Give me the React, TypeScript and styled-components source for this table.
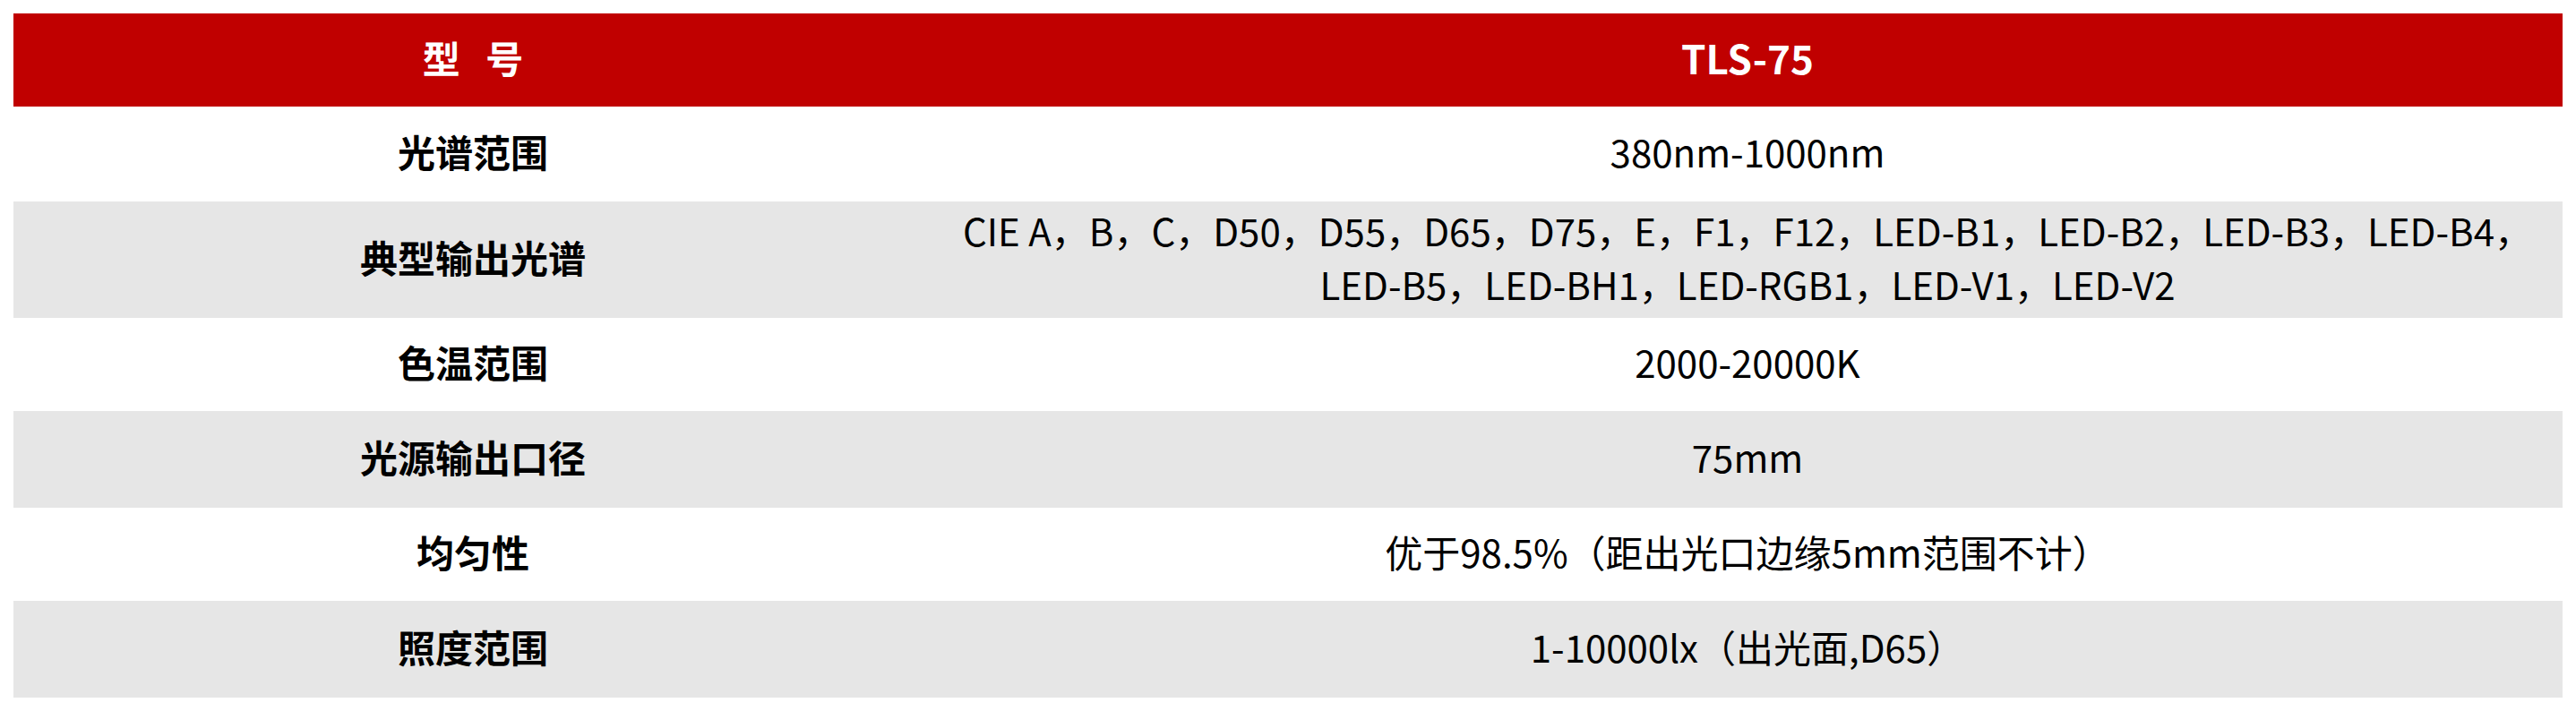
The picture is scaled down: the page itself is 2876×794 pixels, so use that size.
import styled, { createGlobalStyle } from 'styled-components';

const GlobalStyle = createGlobalStyle`
  html, body {
    margin: 0;
    padding: 0;
    background: #ffffff;
  }
  body {
    font-family: "Noto Sans CJK SC", "Noto Sans", sans-serif;
    color: #000000;
  }
`;

const Page = styled.div`
  padding: 15px;
`;

const SpecTable = styled.table`
  width: 100%;
  border-collapse: collapse;
  border-spacing: 0;
  table-layout: fixed;
`;

const HeadRow = styled.tr`
  height: 104px;
  background: #c00000;
  color: #ffffff;
`;

// the CJK font sits a little low in its line box, so cells carry a bit of bottom padding
const HeadCell = styled.th<{ $wide?: boolean }>`
  padding: 0 0 7px;
  width: ${(p) => (p.$wide ? 'auto' : '1026px')};
  font-size: ${(p) => (p.$wide ? '44px' : '42px')};
  font-weight: 700;
  text-align: center;
  white-space: pre;
`;

const Row = styled.tr<{ $shade: boolean; $h: number }>`
  height: ${(p) => p.$h}px;
  background: ${(p) => (p.$shade ? '#e6e6e6' : '#ffffff')};
`;

const LabelCell = styled.td`
  padding: 0 0 7px;
  font-size: 42px;
  font-weight: 700;
  text-align: center;
`;

const ValueCell = styled.td`
  padding: 0 0 7px;
  font-size: 42px;
  font-weight: 400;
  line-height: 60px;
  text-align: center;
`;

const rows: { label: string; value: React.ReactNode; h: number }[] = [
  { label: '光谱范围', value: '380nm-1000nm', h: 106 },
  {
    label: '典型输出光谱',
    value: (
      <>
        CIE A，B，C，D50，D55，D65，D75，E，F1，F12，LED-B1，LED-B2，LED-B3，LED-B4，
        <br />
        LED-B5，LED-BH1，LED-RGB1，LED-V1，LED-V2
      </>
    ),
    h: 130,
  },
  { label: '色温范围', value: '2000-20000K', h: 104 },
  { label: '光源输出口径', value: '75mm', h: 108 },
  { label: '均匀性', value: '优于98.5%（距出光口边缘5mm范围不计）', h: 104 },
  { label: '照度范围', value: '1-10000lx（出光面,D65）', h: 108 },
];

export default function App() {
  return (
    <>
      <GlobalStyle />
      <Page>
        <SpecTable>
          <thead>
            <HeadRow>
              <HeadCell>{'型   号'}</HeadCell>
              <HeadCell $wide>TLS-75</HeadCell>
            </HeadRow>
          </thead>
          <tbody>
            {rows.map((r, i) => (
              <Row key={r.label} $shade={i % 2 === 1} $h={r.h}>
                <LabelCell>{r.label}</LabelCell>
                <ValueCell>{r.value}</ValueCell>
              </Row>
            ))}
          </tbody>
        </SpecTable>
      </Page>
    </>
  );
}
